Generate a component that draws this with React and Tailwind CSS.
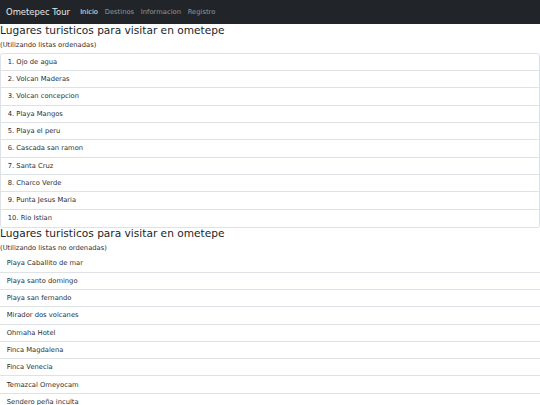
import React from 'react';

const ordenados = [
  'Ojo de agua',
  'Volcan Maderas',
  'Volcan concepcion',
  'Playa Mangos',
  'Playa el peru',
  'Cascada san ramon',
  'Santa Cruz',
  'Charco Verde',
  'Punta Jesus Maria',
  'Rio Istian',
];

const noOrdenados = [
  'Playa Caballito de mar',
  'Playa santo domingo',
  'Playa san fernando',
  'Mirador dos volcanes',
  'Ohmaha Hotel',
  'Finca Magdalena',
  'Finca Venecia',
  'Temazcal Omeyocam',
  'Sendero peña inculta',
  'Reserva Charco Verde',
];

const links = [
  { label: 'Inicio', active: true },
  { label: 'Destinos' },
  { label: 'Informacion' },
  { label: 'Registro' },
];

function Navbar() {
  return (
    <nav className="h-[23.6px] bg-[#212529] flex items-center px-[5px]">
      <span className="text-[8.44px] leading-[12px] text-white/90 mr-[6.75px] pl-px">Ometepec Tour</span>
      <ul className="flex">
        {links.map((l) => (
          <li key={l.label}>
            <a
              className={`block px-[3.375px] text-[6.75px] leading-[10px] ${
                l.active ? 'text-white/90' : 'text-white/50'
              }`}
            >
              {l.label}
            </a>
          </li>
        ))}
      </ul>
    </nav>
  );
}

function Heading({ subtitle, className = '' }) {
  return (
    <div className={className}>
      <h3 className="text-[10.6px] leading-[13px] mb-[3.4px] text-[#212529]">
        Lugares turisticos para visitar en ometepe
      </h3>
      <p className="text-[6.75px] leading-[10.1px] mb-[2px] text-[#2b2f33]">{subtitle}</p>
    </div>
  );
}

export default function App() {
  return (
    <div className="w-[540px] h-[405px] overflow-hidden bg-white font-['DejaVu_Sans',sans-serif] text-[#212529]">
      <Navbar />
      <Heading subtitle="(Utilizando listas ordenadas)" className="pt-[0.5px]" />
      <ol className="border border-[#dee2e6] rounded-[2.5px]">
        {ordenados.map((item, i) => (
          <li
            key={item}
            className="h-[17.33px] flex items-center px-[6.75px] text-[6.75px] text-[#2b2f33] border-b border-[#dee2e6] last:border-b-0"
          >
            {i + 1}. {item}
          </li>
        ))}
      </ol>
      <Heading subtitle="(Utilizando listas no ordenadas)" className="-mt-[1px]" />
      <ul>
        {noOrdenados.map((item) => (
          <li
            key={item}
            className="h-[17.3px] flex items-center px-[6.75px] text-[6.75px] text-[#2b2f33] border-b border-[#dee2e6]"
          >
            {item}
          </li>
        ))}
      </ul>
    </div>
  );
}
